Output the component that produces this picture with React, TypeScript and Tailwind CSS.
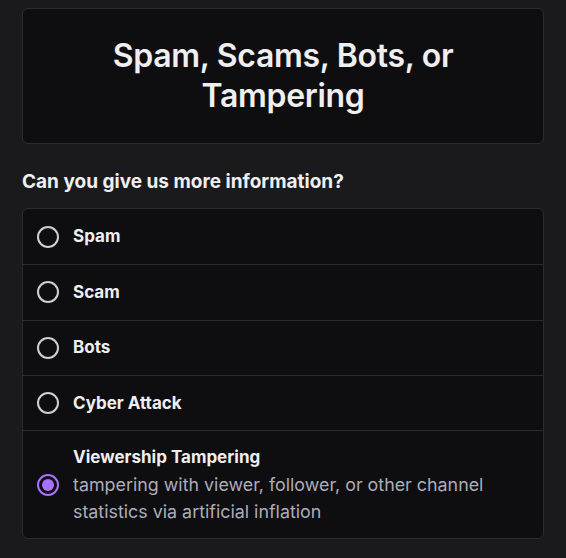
import { useState } from "react";

const options = [
  { id: "spam", label: "Spam" },
  { id: "scam", label: "Scam" },
  { id: "bots", label: "Bots" },
  { id: "cyber", label: "Cyber Attack" },
  {
    id: "viewership",
    label: "Viewership Tampering",
    description:
      "tampering with viewer, follower, or other channel statistics via artificial inflation",
  },
];

export default function App() {
  const [selected, setSelected] = useState("viewership");

  return (
    <div
      className="min-h-[558px] w-full bg-[#1a1a1d] px-[22px] pt-2 text-white"
      style={{ fontFamily: "Inter, 'Noto Sans', sans-serif" }}
    >
      {/* Header card */}
      <div className="flex h-[136px] items-center justify-center rounded-md border border-[#2c2c30] bg-[#0e0e10] px-8">
        <h1 className="text-center text-[32px] font-semibold leading-[40px] tracking-[-0.3px] text-[#efeff1]">
          Spam, Scams, Bots, or
          <br />
          Tampering
        </h1>
      </div>

      <p className="mt-[26px] text-[19px] font-bold leading-6 text-[#efeff1]">
        Can you give us more information?
      </p>

      {/* Options list */}
      <div className="mt-[14px] overflow-hidden rounded-md border border-[#2c2c30] bg-[#0e0e10]">
        {options.map((opt, i) => {
          const active = selected === opt.id;
          return (
            <button
              key={opt.id}
              onClick={() => setSelected(opt.id)}
              className={`flex w-full items-center gap-[14px] px-[14px] text-left ${
                i > 0 ? "border-t border-[#2c2c30]" : ""
              } ${opt.description ? "py-[13px]" : "h-[55.3px]"}`}
            >
              <span
                className={`flex h-[22px] w-[22px] shrink-0 items-center justify-center rounded-full border-2 ${
                  active ? "border-[#a970ff]" : "border-[#cfcfd4]"
                }`}
              >
                {active && <span className="h-[12px] w-[12px] rounded-full bg-[#a970ff]" />}
              </span>
              <span className="flex flex-col">
                <span className="text-[17px] font-bold leading-[27px] text-[#efeff1]">
                  {opt.label}
                </span>
                {opt.description && (
                  <span className="text-[17.85px] leading-[27px] text-[#adadb8]">
                    {opt.description}
                  </span>
                )}
              </span>
            </button>
          );
        })}
      </div>
    </div>
  );
}
